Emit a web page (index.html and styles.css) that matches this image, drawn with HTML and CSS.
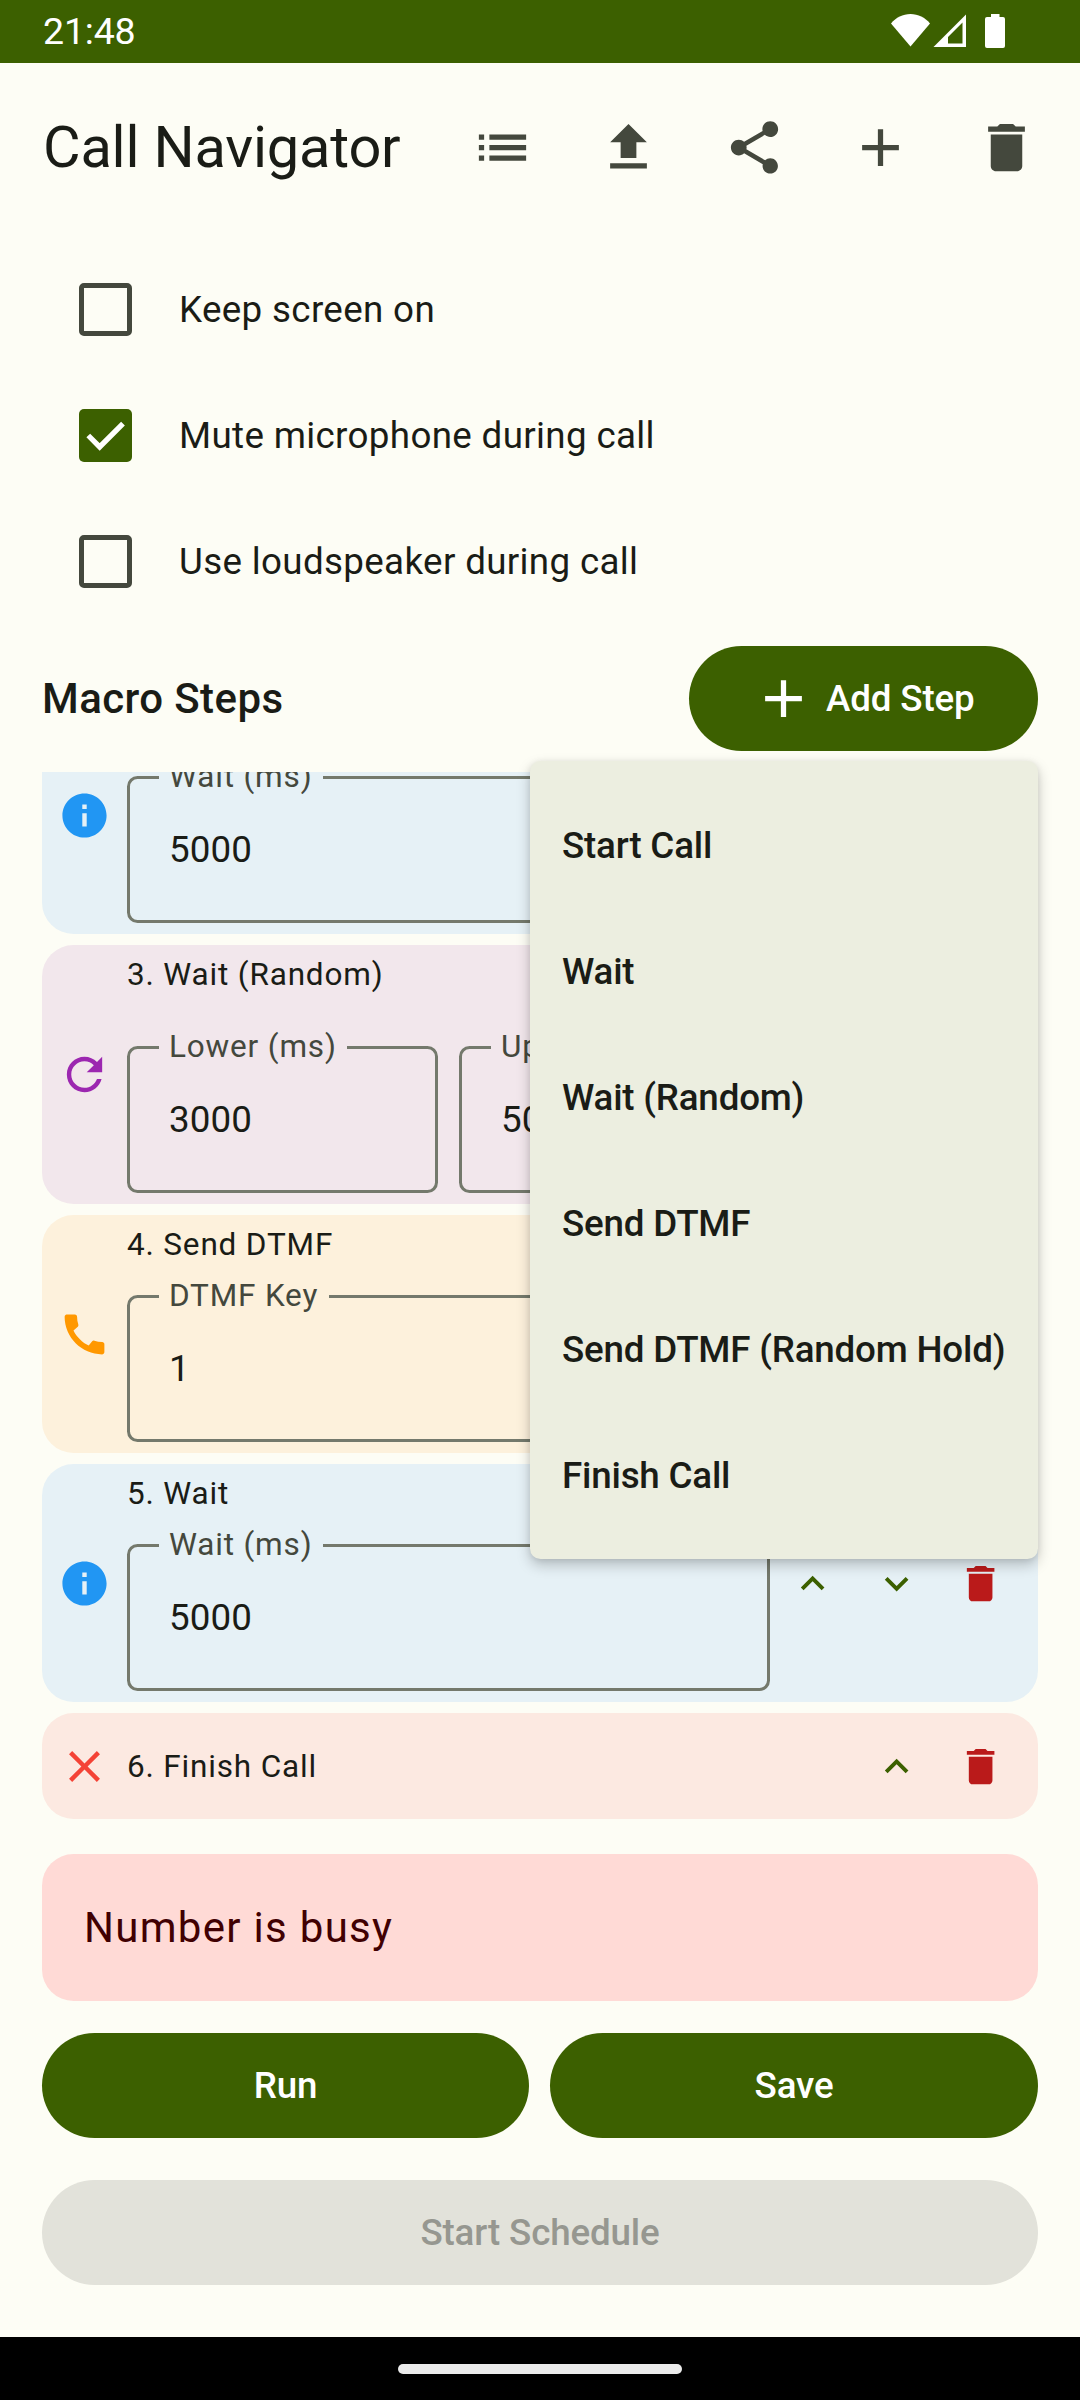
FILE: index.html
```html
<!DOCTYPE html>
<html lang="en">
<head>
  <meta charset="UTF-8" />
  <title>Call Navigator</title>
  <link rel="stylesheet" href="styles.css">
</head>
<body>
  <!-- shared icons -->
  <svg class="sprite" width="0" height="0">
    <symbol id="i-delete" viewBox="0 0 24 24"><path d="M6 19c0 1.1.9 2 2 2h8c1.1 0 2-.9 2-2V7H6v12zM19 4h-3.5l-1-1h-5l-1 1H5v2h14V4z"/></symbol>
    <symbol id="i-add" viewBox="0 0 24 24"><path d="M19 13h-6v6h-2v-6H5v-2h6V5h2v6h6v2z"/></symbol>
    <symbol id="i-up" viewBox="0 0 24 24"><path d="M7.41 15.41L12 10.83l4.59 4.58L18 14l-6-6-6 6z"/></symbol>
    <symbol id="i-down" viewBox="0 0 24 24"><path d="M7.41 8.59L12 13.17l4.59-4.58L18 10l-6 6-6-6z"/></symbol>
    <symbol id="i-info" viewBox="0 0 24 24"><path d="M12 2C6.48 2 2 6.48 2 12s4.48 10 10 10 10-4.48 10-10S17.52 2 12 2zm1 15h-2v-6h2v6zm0-8h-2V7h2v2z"/></symbol>
  </svg>

  <div class="status-bar">
    <span class="clock">21:48</span>
    <svg class="status-icons" viewBox="0 0 120 63">
      <path d="M20.500 46.500L1 23.500C6 17.500 12.800 14 20.500 14s14.500 3.500 19.500 9.500z"/>
      <path fill-rule="evenodd" d="M43.500 47L76 14.500V47zM58 43.500H72.500V22.500L58 37z"/>
      <path d="M101 14h8.500v3h3.500a2 2 0 0 1 2 2v27a2 2 0 0 1-2 2H97a2 2 0 0 1-2-2V19a2 2 0 0 1 2-2h4z"/>
    </svg>
  </div>

  <header class="top-bar">
    <h1>Call Navigator</h1>
    <div class="top-actions">
      <button class="icon-button"><svg viewBox="0 0 24 24"><path d="M3 13h2v-2H3v2zm0 4h2v-2H3v2zm0-8h2V7H3v2zm4 4h14v-2H7v2zm0 4h14v-2H7v2zM7 7v2h14V7H7z"/></svg></button>
      <button class="icon-button"><svg viewBox="0 0 24 24"><path d="M9 16h6v-6h4l-7-7-7 7h4zm-4 2h14v2H5z"/></svg></button>
      <button class="icon-button"><svg viewBox="0 0 24 24"><path d="M18 16.080c-.76 0-1.440.3-1.960.77L8.910 12.700c.05-.23.09-.46.09-.7s-.04-.47-.09-.7l7.050-4.110c.54.5 1.250.81 2.040.81 1.660 0 3-1.340 3-3s-1.340-3-3-3-3 1.340-3 3c0 .24.04.47.09.7L8.040 9.810C7.500 9.310 6.790 9 6 9c-1.660 0-3 1.340-3 3s1.340 3 3 3c.79 0 1.500-.31 2.040-.81l7.120 4.160c-.05.21-.08.43-.08.65 0 1.610 1.310 2.920 2.920 2.920s2.920-1.310 2.920-2.920-1.310-2.920-2.920-2.920z"/></svg></button>
      <button class="icon-button"><svg><use href="#i-add"/></svg></button>
      <button class="icon-button"><svg><use href="#i-delete"/></svg></button>
    </div>
  </header>

  <main class="content">
    <div class="options">
      <label class="option"><span class="box"></span>Keep screen on</label>
      <label class="option"><span class="box checked"><svg viewBox="0 0 20 20"><path d="M3.500 10l4.300 4.300L16.600 5.500"/></svg></span>Mute microphone during call</label>
      <label class="option"><span class="box"></span>Use loudspeaker during call</label>
    </div>

    <div class="section-header">
      <h2>Macro Steps</h2>
      <button class="button add-step"><svg><use href="#i-add"/></svg>Add Step</button>
      <div class="menu">
        <div class="menu-item">Start Call</div>
        <div class="menu-item">Wait</div>
        <div class="menu-item">Wait (Random)</div>
        <div class="menu-item">Send DTMF</div>
        <div class="menu-item">Send DTMF (Random Hold)</div>
        <div class="menu-item">Finish Call</div>
      </div>
    </div>

    <div class="steps">
      <div class="step-list">
        <div class="step wait">
          <svg class="step-icon"><use href="#i-info"/></svg>
          <div class="step-body">
            <div class="step-title scrolled-off"></div>
            <fieldset class="field"><legend>Wait (ms)</legend>5000</fieldset>
          </div>
          <div class="step-actions">
            <svg><use href="#i-up"/></svg>
            <svg><use href="#i-down"/></svg>
            <svg class="delete"><use href="#i-delete"/></svg>
          </div>
        </div>

        <div class="step random">
          <svg class="step-icon" viewBox="0 0 24 24"><path d="M17.650 6.350C16.200 4.900 14.210 4 12 4c-4.420 0-7.990 3.580-7.990 8s3.570 8 7.990 8c3.730 0 6.840-2.550 7.730-6h-2.080c-.82 2.330-3.040 4-5.650 4-3.310 0-6-2.690-6-6s2.690-6 6-6c1.660 0 3.140.69 4.220 1.780L13 11h7V4l-2.350 2.350z"/></svg>
          <div class="step-body">
            <div class="step-title">3. Wait (Random)</div>
            <div class="field-row">
              <fieldset class="field"><legend>Lower (ms)</legend>3000</fieldset>
              <fieldset class="field"><legend>Upper (ms)</legend>5000</fieldset>
            </div>
          </div>
          <div class="step-actions">
            <svg><use href="#i-up"/></svg>
            <svg><use href="#i-down"/></svg>
            <svg class="delete"><use href="#i-delete"/></svg>
          </div>
        </div>

        <div class="step dtmf">
          <svg class="step-icon" viewBox="0 0 24 24"><path d="M20.010 15.380c-1.230 0-2.420-.2-3.530-.56-.35-.12-.74-.03-1.010.24l-1.570 1.970c-2.830-1.350-5.480-3.900-6.890-6.830l1.950-1.660c.27-.28.35-.67.24-1.020-.37-1.110-.56-2.300-.56-3.530 0-.54-.45-.99-.99-.99H4.190C3.650 3 3 3.240 3 3.990 3 13.280 10.730 21 20.010 21c.71 0 .99-.63.99-1.180v-3.450c0-.54-.45-.99-.99-.99z"/></svg>
          <div class="step-body">
            <div class="step-title">4. Send DTMF</div>
            <fieldset class="field"><legend>DTMF Key</legend>1</fieldset>
          </div>
          <div class="step-actions">
            <svg><use href="#i-up"/></svg>
            <svg><use href="#i-down"/></svg>
            <svg class="delete"><use href="#i-delete"/></svg>
          </div>
        </div>

        <div class="step wait">
          <svg class="step-icon"><use href="#i-info"/></svg>
          <div class="step-body">
            <div class="step-title">5. Wait</div>
            <fieldset class="field"><legend>Wait (ms)</legend>5000</fieldset>
          </div>
          <div class="step-actions">
            <svg><use href="#i-up"/></svg>
            <svg><use href="#i-down"/></svg>
            <svg class="delete"><use href="#i-delete"/></svg>
          </div>
        </div>

        <div class="step finish">
          <svg class="step-icon" viewBox="0 0 24 24"><path d="M19 6.410L17.590 5 12 10.590 6.410 5 5 6.410 10.590 12 5 17.590 6.410 19 12 13.410 17.590 19 19 17.590 13.410 12z"/></svg>
          <div class="step-title">6. Finish Call</div>
          <div class="step-actions">
            <svg><use href="#i-up"/></svg>
            <svg class="delete"><use href="#i-delete"/></svg>
          </div>
        </div>
      </div>
    </div>

    <div class="error">Number is busy</div>

    <div class="button-row">
      <button class="button">Run</button>
      <button class="button">Save</button>
    </div>
    <button class="button schedule" disabled>Start Schedule</button>
  </main>

  <div class="nav-bar"><div class="handle"></div></div>
</body>
</html>
```
FILE: styles.css
```css
* {
  box-sizing: border-box;
}

body {
  margin: 0;
  width: 1080px;
  height: 2400px;
  display: flex;
  flex-direction: column;
  background: #fdfdf5;
  color: #1a1c16;
  font-family: Roboto, sans-serif;
  font-size: 36.75px;
  overflow: hidden;
}

svg {
  display: block;
  fill: currentColor;
  flex: none;
}

.sprite {
  position: absolute;
}

button {
  border: none;
  padding: 0;
  font: inherit;
  color: inherit;
  background: none;
}

.status-bar {
  height: 63px;
  flex: none;
  padding: 0 70px 0 43px;
  display: flex;
  align-items: center;
  justify-content: space-between;
  background: #3c6000;
  color: #fff;
}

.clock {
  font-size: 37.5px;
  line-height: 63px;
  letter-spacing: -0.2px;
}

.status-icons {
  width: 120px;
  height: 63px;
}

.top-bar {
  height: 168px;
  flex: none;
  padding: 0 10.5px 0 43px;
  display: flex;
  align-items: center;
  justify-content: space-between;
}

h1 {
  margin: 0;
  font-size: 57.75px;
  font-weight: 400;
  letter-spacing: -0.2px;
}

.top-actions {
  display: flex;
  color: #44483d;
}

.icon-button {
  width: 126px;
  height: 126px;
  display: flex;
  align-items: center;
  justify-content: center;
}

.icon-button svg {
  width: 63px;
  height: 63px;
}

.content {
  flex: 1;
  padding: 15px 42px 0;
  display: flex;
  flex-direction: column;
}

.option {
  height: 126px;
  padding-left: 37px;
  display: flex;
  align-items: center;
  gap: 47px;
  letter-spacing: 0.34px;
}

.box {
  width: 53px;
  height: 53px;
  border: 5px solid #44483d;
  border-radius: 5px;
}

.box.checked {
  border: none;
  background: #3c6000;
}

.box svg {
  width: 53px;
  height: 53px;
  fill: none;
  stroke: #fff;
  stroke-width: 2;
}

.section-header {
  position: relative;
  margin-top: 22px;
  display: flex;
  align-items: center;
  justify-content: space-between;
}

h2 {
  margin: 0;
  font-size: 42px;
  font-weight: 500;
  letter-spacing: 0.4px;
}

.button {
  height: 105px;
  border-radius: 53px;
  background: #3c6000;
  color: #fff;
  font-weight: 500;
  letter-spacing: -0.15px;
}

.add-step {
  width: 349px;
  display: flex;
  align-items: center;
  justify-content: center;
  gap: 10.5px;
}

.add-step svg {
  width: 63px;
  height: 63px;
}

.menu {
  position: absolute;
  top: 115px;
  right: 0;
  z-index: 10;
  width: 508px;
  padding: 21px 0;
  border-radius: 10.5px;
  background: #eceee0;
  box-shadow: 0 6px 14px rgba(0, 0, 0, 0.22), 0 1px 6px rgba(0, 0, 0, 0.08);
}

.menu-item {
  height: 126px;
  padding-left: 32px;
  display: flex;
  align-items: center;
  font-weight: 500;
  letter-spacing: -0.2px;
}

/* scrolled viewport, second step is cut off at the top */
.steps {
  height: 1061px;
  margin-top: 21px;
  overflow: hidden;
}

.step-list {
  margin-top: -76px;
  display: flex;
  flex-direction: column;
  gap: 11px;
}

.step {
  height: 238px;
  padding: 0 15px 0 16px;
  display: flex;
  align-items: center;
  border-radius: 31.5px;
}

.step-icon {
  width: 53px;
  height: 53px;
  margin-right: 16px;
}

.step-body {
  flex: 1;
  align-self: flex-start;
  padding-top: 9px;
}

.step-title {
  flex: 1;
  font-size: 31.5px;
  line-height: 42px;
  letter-spacing: 0.83px;
}

.scrolled-off {
  height: 42px;
}

.field {
  flex: 1;
  min-width: 0;
  height: 167px;
  margin: 9px 1px 0 0;
  padding: 27px 0 0 39px;
  border: 3px solid #74796c;
  border-radius: 10.5px;
  line-height: 50px;
  letter-spacing: 0.1px;
}

.field legend {
  margin-left: -10.5px;
  padding: 0 10.5px;
  color: #44483d;
  font-size: 31.5px;
  line-height: 42px;
  letter-spacing: 0.83px;
}

.field-row {
  display: flex;
  gap: 20px;
  margin-top: 21px;
}

.wait {
  background: #e6f1f6;
}

.wait .step-icon {
  color: #2196f3;
}

.random {
  height: 259px;
  background: #f2e7ec;
}

.random .step-icon {
  color: #9c27b0;
}

.dtmf {
  background: #fdf1dc;
}

.dtmf .step-icon {
  color: #ff9800;
}

.finish {
  height: 106px;
  background: #fce9e1;
}

.finish .step-title {
  padding-top: 1px;
}

.finish .step-icon {
  color: #f44336;
}

.step-actions {
  display: flex;
  padding-top: 1px;
  color: #3c6000;
}

.step-actions svg {
  width: 47.25px;
  height: 47.25px;
  margin: 0 18.375px;
}

.step-actions .delete {
  color: #ba1a1a;
}

.error {
  height: 147px;
  margin-top: 21px;
  padding-left: 42px;
  display: flex;
  align-items: center;
  border-radius: 31.5px;
  background: #ffdad6;
  color: #410002;
  font-size: 42px;
  letter-spacing: 1.3px;
}

.button-row {
  display: grid;
  grid-template-columns: 487px 488px;
  gap: 21px;
  margin-top: 32px;
}

.schedule {
  margin-top: 42px;
  background: #e2e2da;
  color: #969790;
}

.nav-bar {
  height: 63px;
  flex: none;
  display: flex;
  align-items: center;
  justify-content: center;
  background: #000;
}

.handle {
  width: 284px;
  height: 10px;
  border-radius: 5px;
  background: #ebebeb;
}
```
